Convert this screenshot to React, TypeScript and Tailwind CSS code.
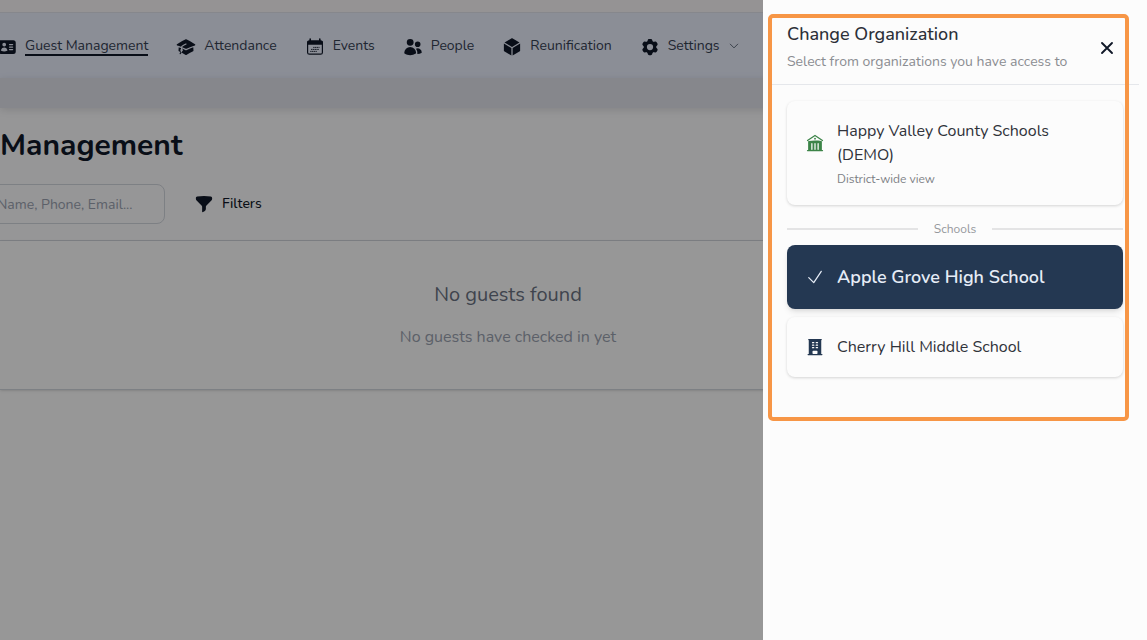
import type { ReactNode } from "react";
import {
  HiAcademicCap,
  HiBuildingLibrary,
  HiBuildingOffice,
  HiCog6Tooth,
  HiCube,
  HiFunnel,
  HiIdentification,
  HiOutlineCheck,
  HiOutlineChevronDown,
  HiUsers,
} from "react-icons/hi2";

function CalendarIcon({ className }: { className?: string }) {
  return (
    <svg viewBox="-1 -1 20 20" className={className} fill="none" stroke="currentColor" aria-hidden="true">
      <path d="M4.2 1v3M13.8 1v3" strokeWidth="1.6" strokeLinecap="round" />
      <path d="M1 6.8V4.6a2 2 0 0 1 2-2h12a2 2 0 0 1 2 2v2.2z" fill="currentColor" stroke="none" />
      <rect x="1.6" y="3.2" width="14.8" height="13" rx="1.8" strokeWidth="1.2" />
      <path d="M7.2 9.4h6.3M5 11.4h8M4.2 13.4h6.6" strokeWidth="0.9" strokeDasharray="1.4 0.4" />
    </svg>
  );
}

function CloseIcon({ className }: { className?: string }) {
  return (
    <svg viewBox="0 0 20 20" className={className} fill="none" stroke="currentColor" aria-hidden="true">
      <path d="M5 5l10 10M15 5L5 15" strokeWidth="1.9" strokeLinecap="round" />
    </svg>
  );
}

function NavItem({ icon, children, active }: { icon: ReactNode; children: ReactNode; active?: boolean }) {
  return (
    <a href="#" className="flex shrink-0 items-center gap-2">
      {icon}
      <span className={active ? "border-b-2 border-gray-900" : "border-b-2 border-transparent"}>{children}</span>
    </a>
  );
}

function OrgButton({ icon, title, note }: { icon: ReactNode; title: string; note?: string }) {
  return (
    <button
      type="button"
      className="w-full rounded-lg p-[18px] text-left shadow-[0_1px_3px_rgba(0,0,0,0.16)]"
    >
      <span className="flex items-center gap-3">
        {icon}
        <span className="text-base leading-6 text-[#30333a]">{title}</span>
      </span>
      {note && <span className="mt-1 block pl-8 text-xs leading-4 text-[#7c7f85]">{note}</span>}
    </button>
  );
}

export default function App() {
  return (
    <div className="relative min-h-screen overflow-hidden bg-[#fcfcfc] font-[Nunito,Lato,sans-serif] text-gray-900">
      <div className="h-3 bg-[#f9f5f7]" />
      <nav className="flex h-[66px] items-center gap-7 border-t border-[#dfe2ea] bg-[#e8edfb] pt-0.5 text-sm leading-4 text-gray-700">
        <div className="-ml-[3px]">
          <NavItem active icon={<HiIdentification className="size-5 text-gray-900" />}>Guest Management</NavItem>
        </div>
        <NavItem icon={<HiAcademicCap className="size-5 text-gray-900" />}>Attendance</NavItem>
        <NavItem icon={<CalendarIcon className="size-5 text-gray-900" />}>Events</NavItem>
        <NavItem icon={<HiUsers className="size-5 text-gray-900" />}>People</NavItem>
        <NavItem icon={<HiCube className="size-5 text-gray-900" />}>Reunification</NavItem>
        <NavItem icon={<HiCog6Tooth className="size-5 text-gray-900" />}>
          <span className="flex items-center gap-2">
            Settings <HiOutlineChevronDown className="size-3" />
          </span>
        </NavItem>
      </nav>
      <div className="relative h-[30px] bg-[#dfe2e9] shadow-[0_2px_8px_rgba(0,0,0,0.12)]" />

      <main>
        <section className="border-b border-gray-300 bg-[#fafafc] pt-[18px] pb-4">
          <h1 className="text-3xl leading-10 font-bold">Management</h1>
          <div className="mt-[18px] flex items-center gap-7">
            <input
              type="text"
              aria-label="Search guests"
              placeholder="Name, Phone, Email..."
              className="-ml-2 h-10 w-[173px] rounded-lg border border-gray-300 px-1 text-sm placeholder:text-gray-400"
            />
            <button type="button" className="flex items-center gap-2 px-px text-sm font-medium">
              <HiFunnel className="size-5" /> Filters
            </button>
          </div>
        </section>
        <section className="flex flex-col items-center gap-4 border-b border-gray-300 py-10 pr-[131px] shadow-sm">
          <h2 className="text-xl leading-7 text-gray-500">No guests found</h2>
          <p className="text-base leading-6 text-gray-400">No guests have checked in yet</p>
        </section>
      </main>

      <div className="absolute inset-0 bg-black/40" />

      <aside
        role="dialog"
        aria-label="Change Organization"
        className="absolute inset-y-0 right-0 w-96 bg-[#fcfcfc] px-2"
      >
        <header className="flex items-center justify-between border-b border-gray-200 pt-[22px] pr-[22px] pb-2.5 pl-4">
          <div>
            <h2 className="text-lg leading-6 font-medium text-[#2c3038]">Change Organization</h2>
            <p className="mt-1 text-sm leading-6 text-[#8b8d92]">Select from organizations you have access to</p>
          </div>
          <button type="button" aria-label="Close" className="text-gray-900">
            <CloseIcon className="size-5" />
          </button>
        </header>
        <div className="flex flex-col gap-2 pt-4 pr-4 pl-4">
          <OrgButton
            icon={<HiBuildingLibrary className="size-5 shrink-0 text-[#3c8448]" />}
            title="Happy Valley County Schools (DEMO)"
            note="District-wide view"
          />
          <div className="mt-2 flex items-center gap-4 text-xs leading-4 text-[#96989c]">
            <span className="h-0.5 flex-1 bg-[#e4e4e5]" />
            Schools
            <span className="h-0.5 flex-1 bg-[#e4e4e5]" />
          </div>
          <button
            type="button"
            className="flex h-16 w-full items-center gap-3 rounded-lg bg-[#243852] px-[18px] text-left text-[#e6ecf6] shadow-md"
          >
            <HiOutlineCheck className="size-5 shrink-0" />
            <span className="text-lg leading-7 font-semibold">Apple Grove High School</span>
          </button>
          <OrgButton
            icon={<HiBuildingOffice className="size-5 shrink-0 text-[#243852]" />}
            title="Cherry Hill Middle School"
          />
        </div>
        <div className="pointer-events-none absolute top-[14px] right-[18px] left-[5px] h-[407px] rounded-[5px] border-4 border-[#f79646]" />
      </aside>
    </div>
  );
}
